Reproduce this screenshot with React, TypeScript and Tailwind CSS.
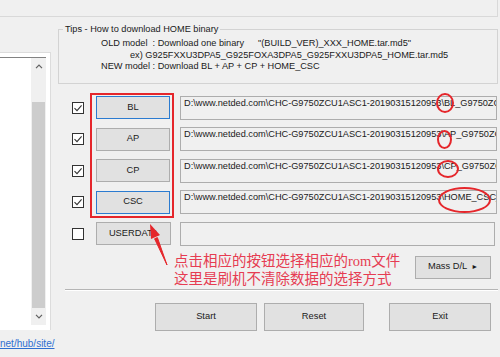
import clsx from 'clsx'

const RED = 'border-[#e5262b]'

const rows = [
  { label: 'BL', checked: true, focus: true, path: '\\BL_G9750ZCU1ASC1_CP12456789_CL15870042_QB22781354_REV01_user_low_ship_meta.tar.md5' },
  { label: 'AP', checked: true, focus: false, path: '\\AP_G9750ZCU1ASC1_CL15870042_QB22781354_REV01_user_low_ship_meta.tar.md5' },
  { label: 'CP', checked: true, focus: false, path: '\\CP_G9750ZCU1ASC1_CP12456789_CL15870042_QB22781354_REV01_user_low_ship.tar.md5' },
  { label: 'CSC', checked: true, focus: true, path: '\\HOME_CSC_CHC_G9750CHC1ASC1_CL15870042_QB22781354_REV01_user_low_ship.tar.md5' },
]

const BASE = 'D:\\www.netded.com\\CHC-G9750ZCU1ASC1-20190315120953'

const Check = ({ checked }: { checked: boolean }) => (
  <div className="flex h-[12px] w-[12px] shrink-0 items-center justify-center border border-[#333] bg-white">
    {checked && (
      <svg width="10" height="10" viewBox="0 0 10 10">
        <path d="M1.5 5.2 L4 7.6 L8.6 2.4" fill="none" stroke="#333" strokeWidth="1.1" />
      </svg>
    )}
  </div>
)

const WinButton = ({
  children,
  className,
  focus,
}: {
  children: React.ReactNode
  className?: string
  focus?: boolean
}) => (
  <div
    className={clsx(
      'flex shrink-0 items-center justify-center border bg-[#e1e1e1] text-[9.3px] text-[#1a1a1a]',
      focus ? 'border-[#2b7bd0]' : 'border-[#adadad]',
      className,
    )}
  >
    {children}
  </div>
)

const Chevron = ({ up }: { up?: boolean }) => (
  <svg width="8" height="5" viewBox="0 0 8 5">
    <path
      d={up ? 'M1 4.2 L4 1.2 L7 4.2' : 'M1 0.8 L4 3.8 L7 0.8'}
      fill="none"
      stroke="#606060"
      strokeWidth="1.2"
    />
  </svg>
)

export default function App() {
  return (
    <div className="relative h-[357px] w-[500px] overflow-hidden bg-[#f0f0f0] font-['Liberation_Sans',Arial,sans-serif] text-[#1a1a1a]">
      <div className="h-[17px] w-[498px] border-r border-b border-[#d9d9d9]" />

      <div className="flex">
        {/* left list panel */}
        <div className="flex w-[51px] shrink-0 flex-col">
          <div className="mt-[35px] h-[278px] border-t border-r border-[#dcdcdc] bg-white pt-[4px]">
            <div className="mr-[4px] flex h-[268px] border-t border-[#828282]">
              <div className="flex-1 bg-white" />
              <div className="flex w-[15px] flex-col bg-[#f0f0f0]">
                <div className="flex h-[17px] items-center justify-center">
                  <Chevron up />
                </div>
                <div className="h-[27px]" />
                <div className="mx-[1px] flex-1 bg-[#cdcdcd]" />
                <div className="flex h-[17px] items-center justify-center">
                  <Chevron />
                </div>
              </div>
            </div>
          </div>
          <div className="mt-[8px] whitespace-nowrap text-[10px] leading-[12px] text-[#2f6fd1] underline">
            net/hub/site/
          </div>
        </div>

        {/* main */}
        <div className="ml-[7px] flex w-[440px] flex-col">
          <fieldset className="mt-[6px] border border-[#d3d3d3] px-0 pt-[3px] pb-[10px]">
            <legend className="ml-[4px] px-[2px] text-[9.2px] leading-[12px]">
              Tips - How to download HOME binary
            </legend>
            <div className="pl-[42px] text-[9.2px] leading-[11.5px] whitespace-pre">
              <div className="flex">
                <span className="w-[157px]">OLD model  : Download one binary</span>
                <span>"(BUILD_VER)_XXX_HOME.tar.md5"</span>
              </div>
              <div className="pl-[29px]">ex) G925FXXU3DPA5_G925FOXA3DPA5_G925FXXU3DPA5_HOME.tar.md5</div>
              <div>NEW model : Download BL + AP + CP + HOME_CSC</div>
            </div>
          </fieldset>

          <div className="mt-[12px] flex flex-col gap-[7.5px]">
            {rows.map((r) => (
              <div key={r.label} className="flex h-[24px] items-center">
                <div className="ml-[14px]">
                  <Check checked={r.checked} />
                </div>
                <WinButton focus={r.focus} className="ml-[12px] h-[23px] w-[74px]">
                  {r.label}
                </WinButton>
                <div className="ml-[10px] h-[24px] w-[317px] overflow-hidden border border-[#adadad] bg-[#f0f0f0] pt-[1px] pl-[3px] text-[9.2px] leading-[11px] whitespace-nowrap">
                  {BASE + r.path}
                </div>
              </div>
            ))}
            <div className="flex h-[24px] items-center">
              <div className="ml-[14px]">
                <Check checked={false} />
              </div>
              <WinButton className="ml-[12px] h-[23px] w-[75px]">USERDATA</WinButton>
              <div className="ml-[9px] h-[24px] w-[315px] border border-[#adadad] bg-[#f0f0f0]" />
            </div>
          </div>

          <div className="mt-[6px] flex items-start">
            <div className="ml-[116px] font-['Liberation_Serif','Noto_Sans_CJK_SC',serif] text-[14.5px] leading-[18px] whitespace-nowrap text-[#e63c52]">
              <div>点击相应的按钮选择相应的rom文件</div>
              <div>这里是刷机不清除数据的选择方式</div>
            </div>
            <WinButton className="mt-[4px] mr-[7px] ml-auto h-[23px] w-[76px]">
              Mass D/L <span className="ml-[4px] text-[7px]">►</span>
            </WinButton>
          </div>

          <div className="mt-[1px] ml-[7px] border-t border-b border-t-[#b5b5b5] border-b-white" />

          <div className="mt-[12px] flex">
            <WinButton className="ml-[97px] h-[28px] w-[102px]">Start</WinButton>
            <WinButton className="ml-[7px] h-[28px] w-[100px]">Reset</WinButton>
            <WinButton className="ml-[25px] h-[28px] w-[102px]">Exit</WinButton>
          </div>
        </div>
      </div>

      {/* annotations */}
      <div className={clsx('absolute top-[93px] left-[90px] h-[125px] w-[84px] border-2', RED)} />
      <div className={clsx('absolute top-[93px] left-[436px] h-[20px] w-[18px] rounded-[50%] border-2', RED)} />
      <div className={clsx('absolute top-[130px] left-[437px] h-[19px] w-[15px] rounded-[50%] border-2', RED)} />
      <div className={clsx('absolute top-[160px] left-[437px] h-[18px] w-[22px] rounded-[50%] border-2', RED)} />
      <div className={clsx('absolute top-[187px] left-[438px] h-[26px] w-[53px] rounded-[50%] border-2', RED)} />
      <svg className="absolute top-[218px] left-[140px]" width="35" height="55" viewBox="0 0 35 55">
        <path d="M27 47 L17.4 19.6 L14.6 20.8 Z" fill="#e5262b" stroke="#e5262b" strokeWidth="1" strokeLinejoin="round" />
        <path d="M10 6 L20 17 L11 21 Z" fill="#e5262b" />
      </svg>
    </div>
  )
}
